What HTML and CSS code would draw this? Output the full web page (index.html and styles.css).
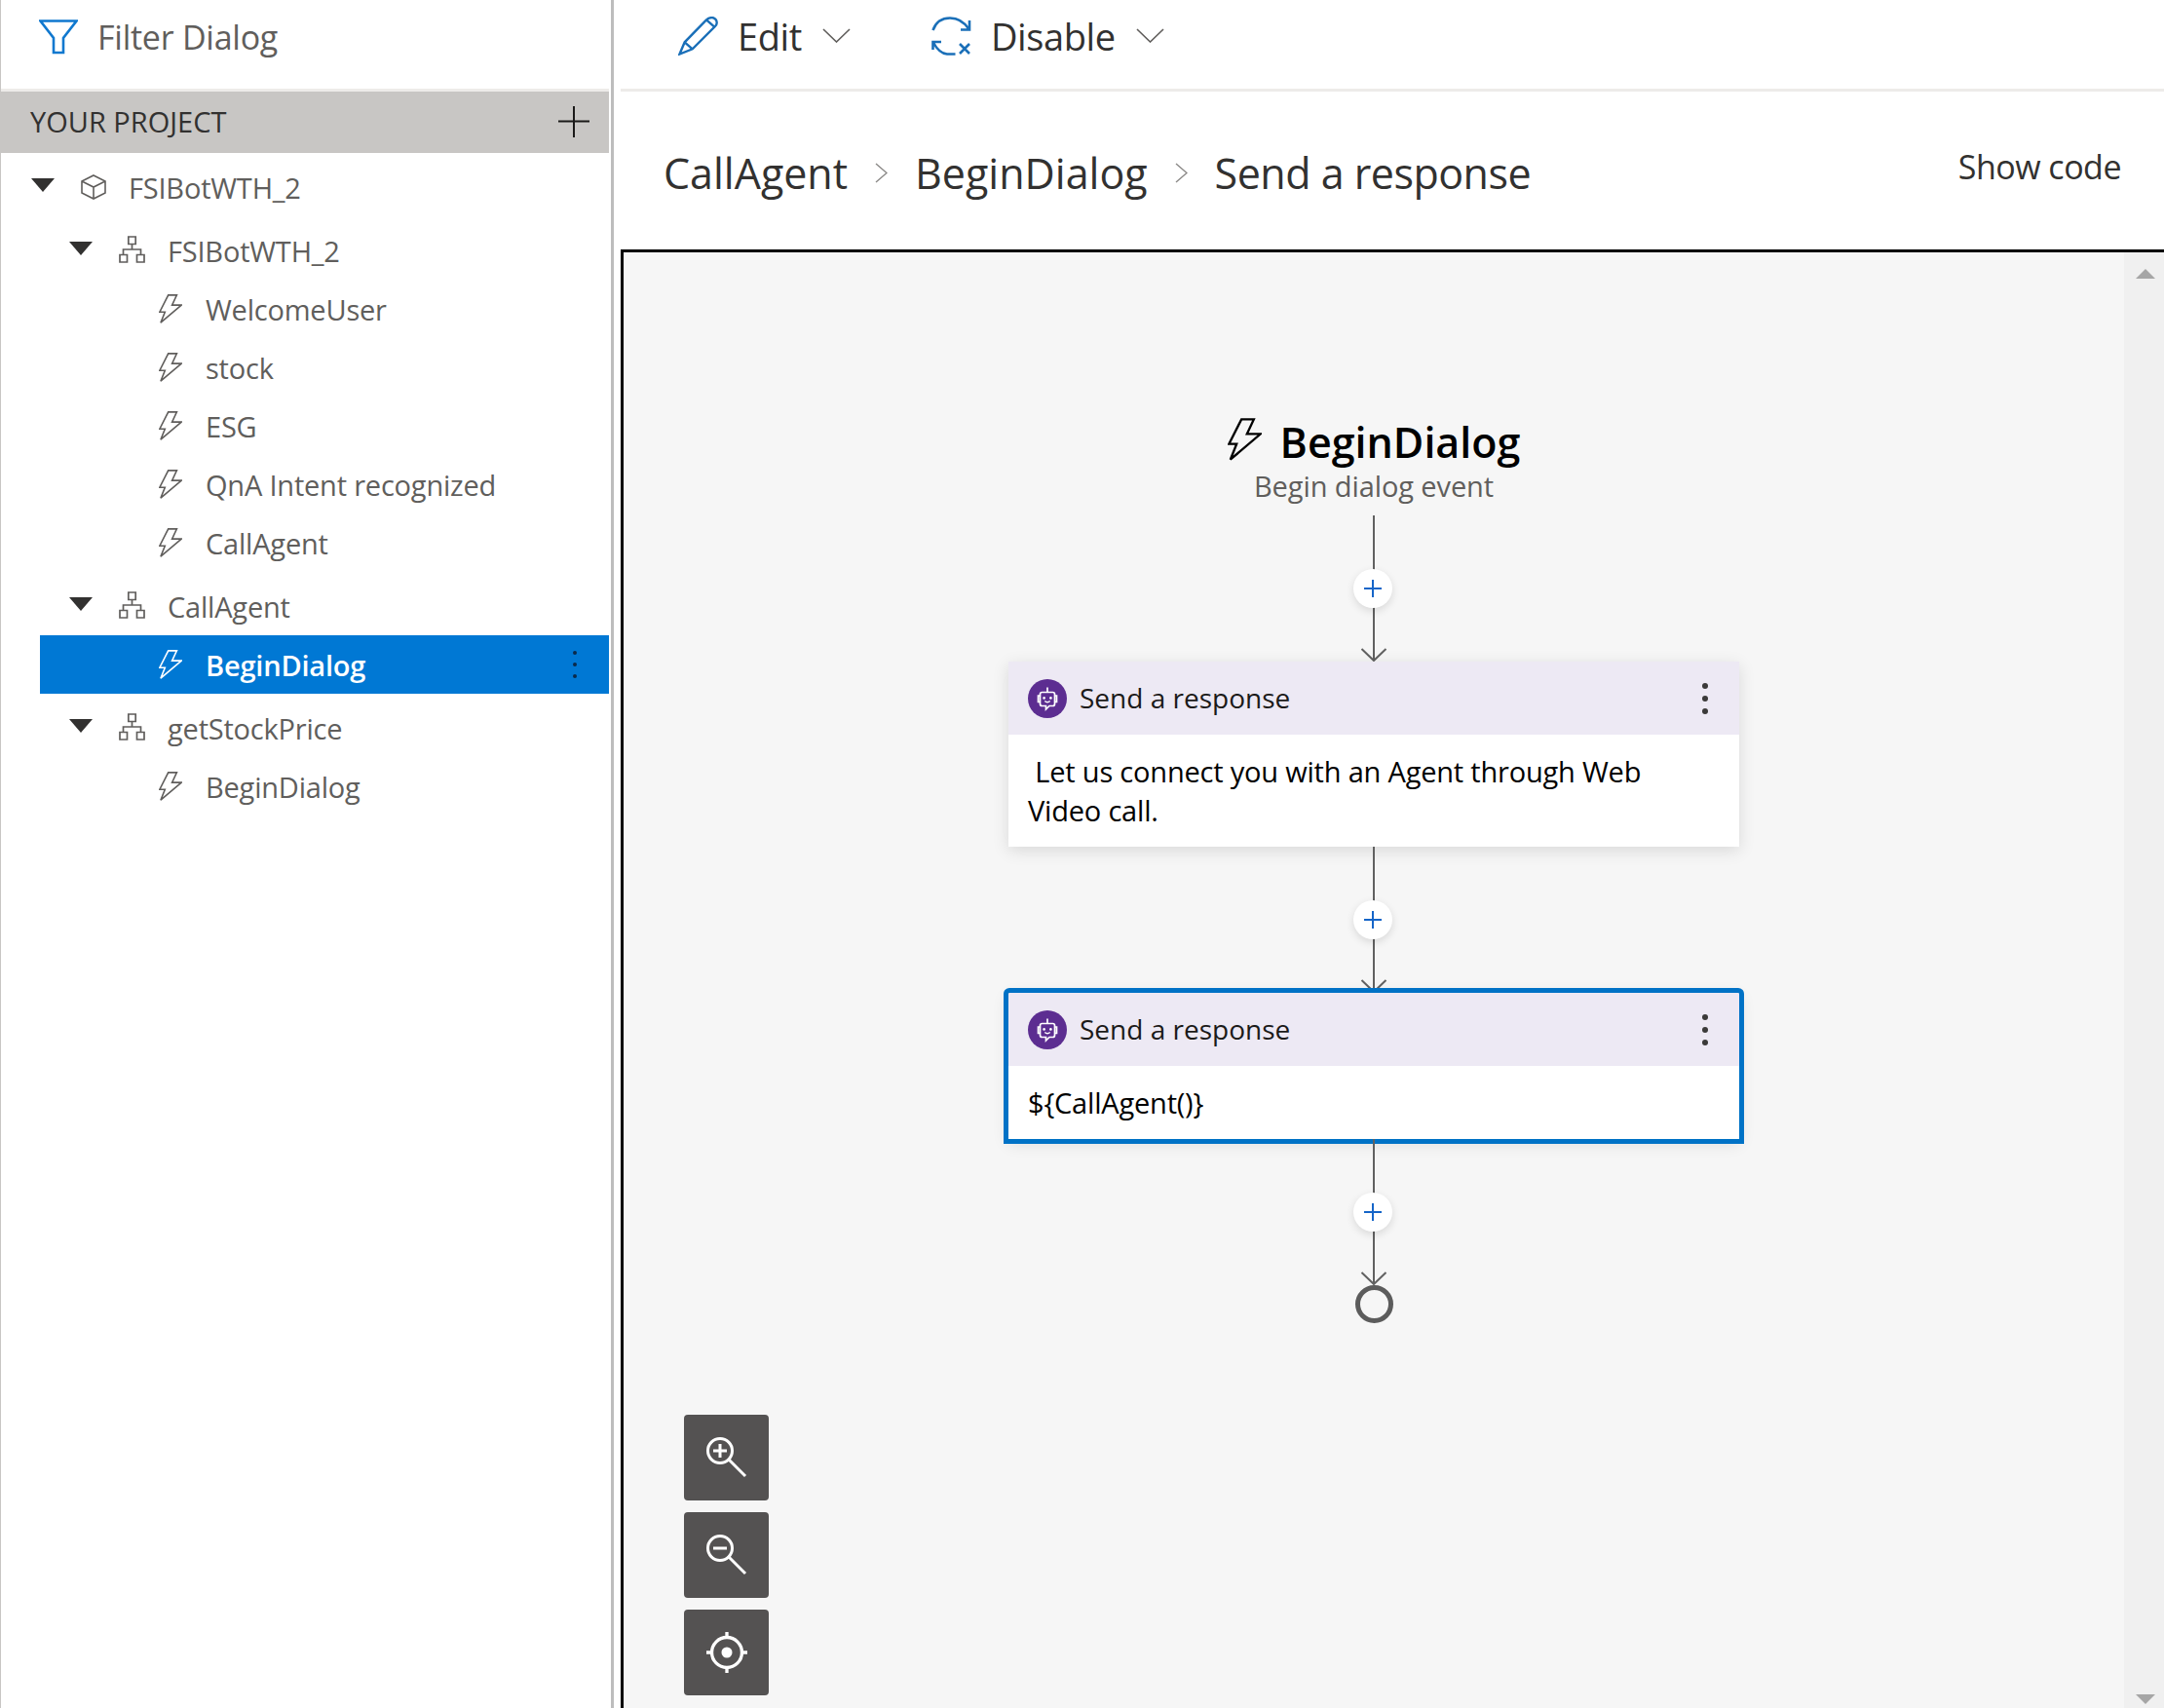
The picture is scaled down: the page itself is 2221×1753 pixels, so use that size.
FILE: index.html
```html
<!DOCTYPE html>
<html lang="en">
<head>
    <meta charset="UTF-8">
    <meta name="viewport" content="width=device-width, initial-scale=1.0">
    <title>Send a response</title>
    <link rel="stylesheet" href="styles.css">
</head>
<body>
    <svg class="sprite" width="0" height="0">
        <symbol id="bolt" viewBox="0 0 24 30">
            <path d="M9.7 0.9H18.4L13.6 11.1H23.2L1.9 29.2L6.3 18.2H0.9Z" fill="none" stroke="currentColor" stroke-width="1.6" stroke-linejoin="miter"/>
        </symbol>
        <symbol id="org" viewBox="0 0 27 28">
            <path d="M9.8 1H17.2V8.5H9.8ZM13.5 8.5V14M4.5 19.5V14H22.5V19.5M1 19.5H8.5V27H1ZM18.5 19.5H26V27H18.5Z" fill="none" stroke="currentColor" stroke-width="1.7"/>
        </symbol>
        <symbol id="cube" viewBox="0 0 26 26">
            <path d="M13 1L25 7V19L13 25L1 19V7ZM1 7L13 13L25 7M13 13V25" fill="none" stroke="currentColor" stroke-width="1.6"/>
        </symbol>
        <symbol id="bot" viewBox="0 0 40 40">
            <circle cx="20" cy="20" r="20" fill="#5c2d91"/>
            <path d="M14.5 13.5H25.5Q27.5 13.5 27.5 15.5V25.5Q27.5 27.5 25.5 27.5H22L18.5 31V27.5H14.5Q12.5 27.5 12.5 25.5V15.5Q12.5 13.5 14.5 13.5ZM12.5 17H10.5V23.5H12.5M27.5 17H29.5V23.5H27.5M20 8.5V13.5" fill="none" stroke="#fff" stroke-width="1.7"/>
            <path d="M17.3 22.6Q20 25 22.7 22.6" fill="none" stroke="#fff" stroke-width="1.4"/>
            <circle cx="16.6" cy="19.4" r="1.3" fill="#fff"/>
            <circle cx="23.4" cy="19.4" r="1.3" fill="#fff"/>
        </symbol>
        <symbol id="edge" viewBox="0 0 28 150">
            <path d="M14 0V149" fill="none" stroke="#616161" stroke-width="2"/>
            <path d="M1.5 137L14 149L26.5 137" fill="none" stroke="#616161" stroke-width="2"/>
        </symbol>
    </svg>

    <aside class="sidebar">
        <div class="filter">
            <svg class="filter-icon" viewBox="0 0 40 36"><path d="M1.5 1.5H38.5L25 19V34H15V19Z" fill="none" stroke="#1078cf" stroke-width="2.6"/></svg>
            <span>Filter Dialog</span>
        </div>
        <div class="project-bar">
            <span>YOUR PROJECT</span>
            <svg class="add-icon" viewBox="0 0 32 32"><path d="M0 15.5H32M16 0V32" stroke="#1b1a19" stroke-width="2"/></svg>
        </div>

        <div class="tree">
            <div class="row row-project">
                <i class="caret"></i>
                <svg class="icon-cube"><use href="#cube"/></svg>
                <span>FSIBotWTH_2</span>
            </div>
            <div class="row row-group">
                <i class="caret"></i>
                <svg class="icon-org"><use href="#org"/></svg>
                <span>FSIBotWTH_2</span>
            </div>
            <div class="row row-leaf"><svg class="icon-bolt"><use href="#bolt"/></svg><span>WelcomeUser</span></div>
            <div class="row row-leaf"><svg class="icon-bolt"><use href="#bolt"/></svg><span>stock</span></div>
            <div class="row row-leaf"><svg class="icon-bolt"><use href="#bolt"/></svg><span>ESG</span></div>
            <div class="row row-leaf"><svg class="icon-bolt"><use href="#bolt"/></svg><span>QnA Intent recognized</span></div>
            <div class="row row-leaf"><svg class="icon-bolt"><use href="#bolt"/></svg><span>CallAgent</span></div>
            <div class="row row-group">
                <i class="caret"></i>
                <svg class="icon-org"><use href="#org"/></svg>
                <span>CallAgent</span>
            </div>
            <div class="row row-leaf selected">
                <svg class="icon-bolt"><use href="#bolt"/></svg>
                <span>BeginDialog</span>
                <div class="row-more"><b></b><b></b><b></b></div>
            </div>
            <div class="row row-group">
                <i class="caret"></i>
                <svg class="icon-org"><use href="#org"/></svg>
                <span>getStockPrice</span>
            </div>
            <div class="row row-leaf"><svg class="icon-bolt"><use href="#bolt"/></svg><span>BeginDialog</span></div>
        </div>
    </aside>

    <main class="main">
        <div class="toolbar">
            <button class="tool tool-edit">
                <svg class="tool-icon pencil" viewBox="0 0 41 40">
                    <path d="M1.5 38.5L6.7 26.3L29 3.3Q32 0.7 35.7 1.2Q39.5 2.5 39.7 6.2Q39.8 9 37.3 10.7L14.7 33.3ZM6.7 26.3L14.7 33.3M29 3.3L37.3 10.7" fill="none" stroke="#1a6fb8" stroke-width="2.4"/>
                </svg>
                <span>Edit</span>
                <svg class="chevron" viewBox="0 0 29 15"><path d="M1 1L14.5 14L28 1" fill="none" stroke="#605e5c" stroke-width="1.6"/></svg>
            </button>
            <button class="tool tool-disable">
                <svg class="tool-icon sync" viewBox="0 0 41 40">
                    <path d="M1.5 14Q6 1.5 19 1.5Q31 1.5 38.5 13M39 4V13.5H30" fill="none" stroke="#1a6fb8" stroke-width="2.6"/>
                    <path d="M1.5 26Q8 38 16 38.5H24.5M1.5 34V26H10" fill="none" stroke="#1a6fb8" stroke-width="2.6"/>
                    <path d="M29 28L39 38M39 28L29 38" fill="none" stroke="#1a6fb8" stroke-width="2.6"/>
                </svg>
                <span>Disable</span>
                <svg class="chevron" viewBox="0 0 29 15"><path d="M1 1L14.5 14L28 1" fill="none" stroke="#605e5c" stroke-width="1.6"/></svg>
            </button>
        </div>

        <div class="page-head">
            <nav class="crumbs">
                <span>CallAgent</span>
                <svg class="crumb-sep" viewBox="0 0 13 21"><path d="M1 1L12 10.5L1 20" fill="none" stroke="#8a8886" stroke-width="1.4"/></svg>
                <span>BeginDialog</span>
                <svg class="crumb-sep" viewBox="0 0 13 21"><path d="M1 1L12 10.5L1 20" fill="none" stroke="#8a8886" stroke-width="1.4"/></svg>
                <span class="crumb-last">Send a response</span>
            </nav>
            <a class="show-code">Show code</a>
        </div>

        <section class="canvas">
            <div class="flow">
                <div class="trigger">
                    <div class="trigger-title">
                        <svg class="trigger-bolt"><use href="#bolt"/></svg>
                        <span>BeginDialog</span>
                    </div>
                    <div class="trigger-sub">Begin dialog event</div>
                </div>

                <div class="edge">
                    <svg class="edge-line"><use href="#edge"/></svg>
                    <div class="edge-add"><svg viewBox="0 0 18 18"><path d="M0 9H18M9 0V18" stroke="#1565c8" stroke-width="2"/></svg></div>
                </div>

                <div class="card">
                    <div class="card-head">
                        <svg class="card-icon"><use href="#bot"/></svg>
                        <span>Send a response</span>
                        <div class="card-more"><b></b><b></b><b></b></div>
                    </div>
                    <div class="card-body">&nbsp;Let us connect you with an Agent through Web Video call.</div>
                </div>

                <div class="edge">
                    <svg class="edge-line"><use href="#edge"/></svg>
                    <div class="edge-add"><svg viewBox="0 0 18 18"><path d="M0 9H18M9 0V18" stroke="#1565c8" stroke-width="2"/></svg></div>
                </div>

                <div class="card card-active">
                    <div class="card-head">
                        <svg class="card-icon"><use href="#bot"/></svg>
                        <span>Send a response</span>
                        <div class="card-more"><b></b><b></b><b></b></div>
                    </div>
                    <div class="card-body card-body-short">${CallAgent()}</div>
                </div>

                <div class="edge">
                    <svg class="edge-line"><use href="#edge"/></svg>
                    <div class="edge-add"><svg viewBox="0 0 18 18"><path d="M0 9H18M9 0V18" stroke="#1565c8" stroke-width="2"/></svg></div>
                </div>

                <div class="flow-end"></div>
            </div>

            <div class="zoom-tools">
                <button class="zoom-btn">
                    <svg viewBox="0 0 42 42"><circle cx="14" cy="14" r="12.5" fill="none" stroke="#fff" stroke-width="3"/><path d="M23 23L40 40M7 14H21M14 7V21" fill="none" stroke="#fff" stroke-width="3"/></svg>
                </button>
                <button class="zoom-btn">
                    <svg viewBox="0 0 42 42"><circle cx="14" cy="14" r="12.5" fill="none" stroke="#fff" stroke-width="3"/><path d="M23 23L40 40M7 14H21" fill="none" stroke="#fff" stroke-width="3"/></svg>
                </button>
                <button class="zoom-btn">
                    <svg viewBox="0 0 38 38"><circle cx="19" cy="19" r="14" fill="none" stroke="#fff" stroke-width="3"/><circle cx="19" cy="19" r="5" fill="#fff"/><path d="M19 0V5M19 33V38M0 19H5M33 19H38" stroke="#fff" stroke-width="3"/></svg>
                </button>
            </div>

            <div class="scrollbar">
                <i class="scroll-up"></i>
                <i class="scroll-down"></i>
            </div>
        </section>
    </main>
</body>
</html>
```

FILE: styles.css
```css
html, body {
    height: 100%;
}

body {
    font-family: "Open Sans", "Noto Sans", sans-serif;
    background-color: #fff;
    margin: 0;
    padding: 0;
    display: flex;
    height: 1753px;
    overflow: hidden;
    color: #323130;
}

.sprite {
    position: absolute;
}

button {
    font-family: inherit;
    background: none;
    border: none;
    padding: 0;
    color: inherit;
}

/* left panel */
.sidebar {
    width: 630px;
    flex: none;
    box-sizing: border-box;
    border-left: 1px solid #c8c6c4;
    border-right: 3px solid #bdbdbd;
    padding-right: 2px;
}

.filter {
    height: 94px;
    box-sizing: border-box;
    padding: 0 0 16px 39px;
    display: flex;
    align-items: center;
    gap: 20px;
    font-size: 34px;
    letter-spacing: -0.25px;
    color: #605e5c;
    border-bottom: 3px solid #edebe9;
}

.filter-icon {
    width: 40px;
    height: 36px;
}

.project-bar {
    height: 63px;
    box-sizing: border-box;
    background-color: #c8c6c4;
    display: flex;
    align-items: center;
    justify-content: space-between;
    padding: 0 20px 2px 30px;
    font-size: 29px;
    color: #323130;
}

.add-icon {
    width: 32px;
    height: 32px;
}

.row {
    height: 60px;
    display: flex;
    align-items: center;
    font-size: 29px;
    letter-spacing: -0.2px;
    color: #605e5c;
    box-sizing: border-box;
}

.row span {
    padding-top: 1px;
}

.row-project {
    margin-top: 5px;
    padding-left: 31px;
}

.row-group {
    margin-top: 5px;
    padding-left: 70px;
}

.row-leaf {
    margin-left: 40px;
    padding-left: 122px;
}

.caret {
    width: 0;
    height: 0;
    border-left: 12px solid transparent;
    border-right: 12px solid transparent;
    border-top: 14px solid #323130;
    margin-right: 27px;
    margin-top: -4px;
}

.icon-cube {
    width: 26px;
    height: 26px;
    margin-right: 23px;
}

.icon-org {
    width: 27px;
    height: 28px;
    margin-right: 23px;
    margin-top: -2px;
}

.icon-bolt {
    width: 24px;
    height: 30px;
    margin-right: 24px;
}

.selected {
    background-color: #0078d4;
    color: #fff;
    font-weight: 600;
}

.row-more {
    margin-left: auto;
    margin-right: 33px;
    display: flex;
    flex-direction: column;
    gap: 8px;
}

.row-more b {
    width: 4px;
    height: 4px;
    border-radius: 50%;
    background-color: #0b2a4a;
}

/* right side */
.main {
    flex: 1;
    min-width: 0;
    margin-left: 7px;
    display: flex;
    flex-direction: column;
}

.toolbar {
    height: 94px;
    box-sizing: border-box;
    border-bottom: 3px solid #edebe9;
    padding: 0 0 18px 59px;
    display: flex;
    align-items: center;
    gap: 83px;
}

.tool {
    display: flex;
    align-items: center;
    font-size: 38px;
    letter-spacing: -0.4px;
    color: #323130;
}

.tool-icon {
    width: 41px;
    height: 40px;
    margin-right: 20px;
}

.chevron {
    width: 29px;
    height: 15px;
    margin-left: 21px;
}

.page-head {
    height: 162px;
    flex: none;
    display: flex;
    justify-content: space-between;
    box-sizing: border-box;
    padding: 0 44px 0 44px;
}

.crumbs {
    display: flex;
    align-items: center;
    gap: 28px;
    font-size: 43px;
    margin-top: 4px;
}

.crumb-last {
    letter-spacing: -0.5px;
}

.crumb-sep {
    width: 13px;
    height: 21px;
}

.show-code {
    font-size: 34px;
    letter-spacing: -0.5px;
    margin-top: 54px;
}

.canvas {
    flex: 1;
    min-height: 0;
    position: relative;
    display: flex;
    border-top: 3px solid #000;
    border-left: 3px solid #000;
    background-color: #f6f6f6;
    overflow: hidden;
}

.flow {
    flex: 1;
    display: flex;
    flex-direction: column;
    align-items: center;
    padding-top: 168px;
}

.trigger {
    height: 102px;
    display: flex;
    flex-direction: column;
    align-items: center;
}

.trigger-title {
    display: flex;
    align-items: center;
    gap: 19px;
    font-size: 43px;
    font-weight: 600;
    line-height: 54px;
    color: #000;
}

.trigger-bolt {
    width: 35px;
    height: 44px;
    margin-top: -6px;
    color: #000;
}

.trigger-sub {
    font-size: 29px;
    letter-spacing: -0.1px;
    line-height: 36px;
    color: #605e5c;
}

.edge {
    position: relative;
    width: 40px;
    height: 150px;
    flex: none;
    display: flex;
    justify-content: center;
}

.edge-line {
    width: 28px;
    height: 150px;
}

.edge-add {
    position: absolute;
    left: -1px;
    top: 55px;
    width: 40px;
    height: 40px;
    border-radius: 50%;
    background-color: #fff;
    box-shadow: 0 3px 8px rgba(0, 0, 0, 0.12);
    display: flex;
    align-items: center;
    justify-content: center;
}

.edge-add svg {
    width: 18px;
    height: 18px;
}

.card {
    position: relative;
    width: 750px;
    flex: none;
    background-color: #fff;
    box-shadow: 0 4px 16px rgba(0, 0, 0, 0.12);
}

.card-active::after {
    content: "";
    position: absolute;
    top: -5px;
    left: -5px;
    right: -5px;
    bottom: -5px;
    border: 5px solid #0072c6;
    border-radius: 6px 6px 0 0;
}

.card-head {
    height: 75px;
    box-sizing: border-box;
    padding: 0 32px 0 20px;
    background-color: #ede9f4;
    display: flex;
    align-items: center;
    font-size: 28px;
    color: #1b1a19;
}

.card-head span {
    margin-top: -2px;
}

.card-icon {
    width: 40px;
    height: 40px;
    margin-right: 13px;
}

.card-more {
    margin-left: auto;
    display: flex;
    flex-direction: column;
    gap: 7px;
}

.card-more b {
    width: 6px;
    height: 6px;
    border-radius: 50%;
    background-color: #3b3a39;
}

.card-body {
    height: 115px;
    box-sizing: border-box;
    padding: 18px 60px 0 20px;
    font-size: 29px;
    letter-spacing: -0.2px;
    line-height: 40px;
    color: #000;
}

.card-body-short {
    height: 75px;
}

.flow-end {
    width: 39px;
    height: 39px;
    box-sizing: border-box;
    border: 5px solid #5c5c5c;
    border-radius: 50%;
    flex: none;
}

.zoom-tools {
    position: absolute;
    left: 62px;
    top: 1193px;
    display: flex;
    flex-direction: column;
    gap: 12px;
}

.zoom-btn {
    width: 87px;
    height: 88px;
    background-color: #545252;
    border-radius: 4px;
    display: flex;
    align-items: center;
    justify-content: center;
}

.zoom-btn svg {
    width: 42px;
    height: 42px;
}

.scrollbar {
    width: 41px;
    flex: none;
    background-color: #f0f0f0;
    position: relative;
    display: flex;
    flex-direction: column;
    align-items: center;
    justify-content: space-between;
    padding: 17px 0 4px 3px;
    box-sizing: border-box;
}

.scroll-up {
    width: 0;
    height: 0;
    border-left: 10px solid transparent;
    border-right: 10px solid transparent;
    border-bottom: 10px solid #a6a6a6;
}

.scroll-down {
    width: 0;
    height: 0;
    border-left: 10px solid transparent;
    border-right: 10px solid transparent;
    border-top: 10px solid #a6a6a6;
}
```
